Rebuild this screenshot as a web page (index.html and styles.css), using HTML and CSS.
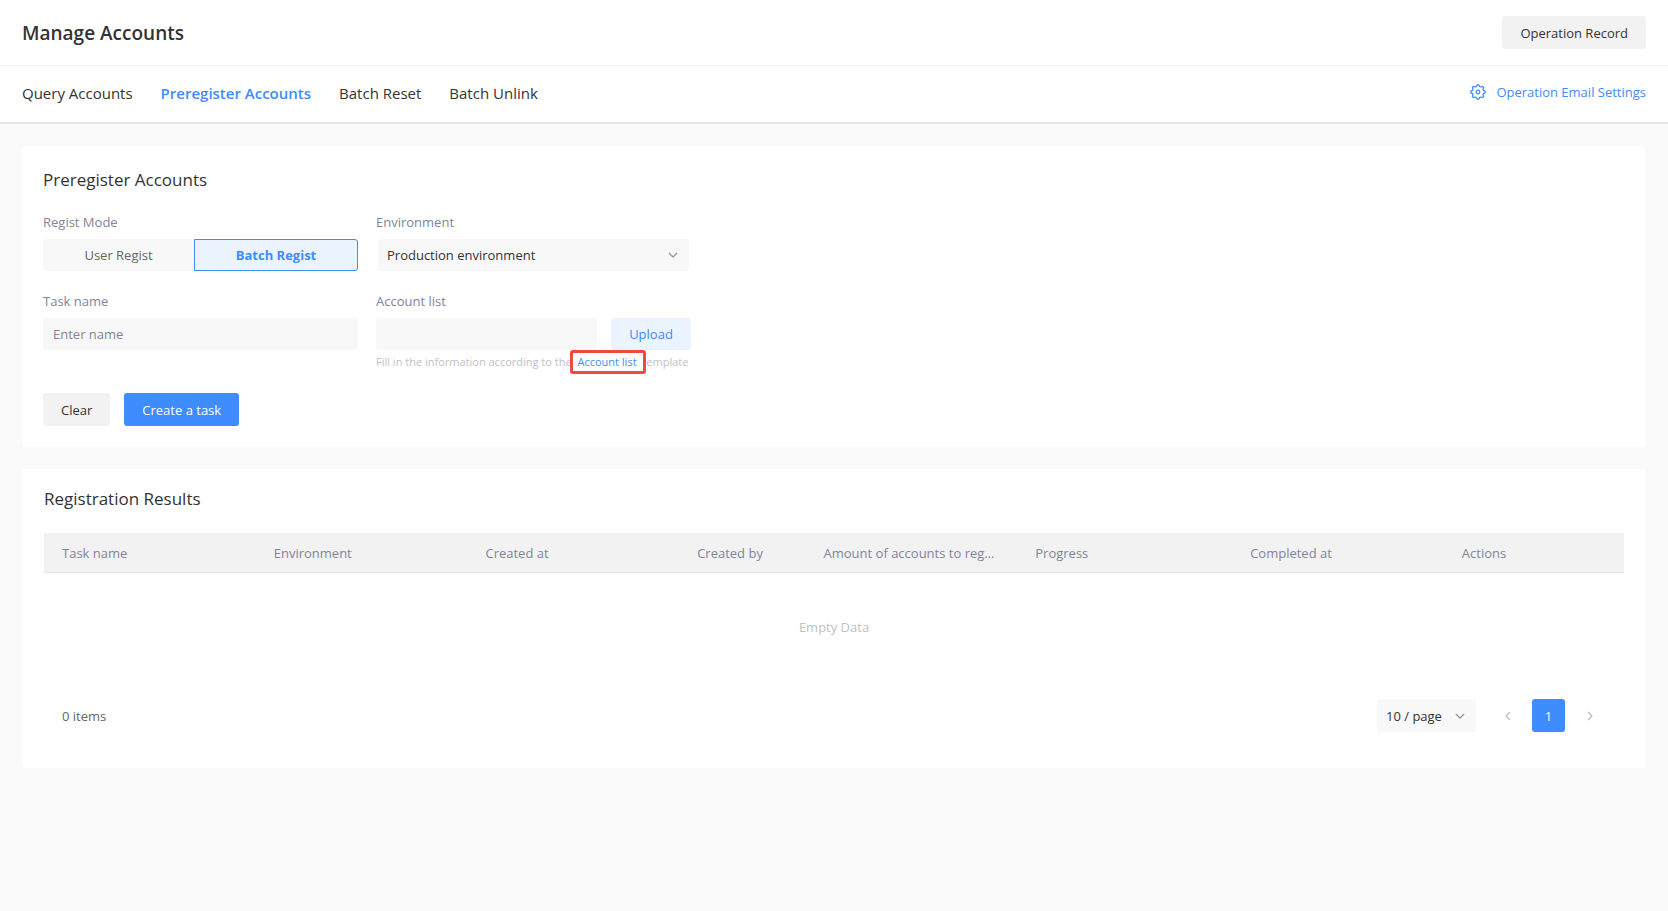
FILE: index.html
```html
<!DOCTYPE html>
<html lang="en">
<head>
<meta charset="utf-8">
<title>Manage Accounts</title>
<link rel="stylesheet" href="styles.css">
</head>
<body>
<header class="page-header">
  <h1 class="page-title">Manage Accounts</h1>
  <button class="btn btn-default" type="button">Operation Record</button>
</header>
<div class="tab-bar">
  <nav class="tabs">
    <a class="tab" href="#query">Query Accounts</a>
    <a class="tab tab-active" href="#preregister" aria-current="page">Preregister Accounts</a>
    <a class="tab" href="#reset">Batch Reset</a>
    <a class="tab" href="#unlink">Batch Unlink</a>
  </nav>
  <a class="settings-link" href="#email-settings">
    <svg class="icon-gear" viewBox="0 0 16 16" aria-hidden="true"><path d="M6.4 2.5 L7.1 .9 H8.9 L9.6 2.5 L10.8 3 L12.4 2.3 L13.7 3.6 L13 5.2 L13.5 6.4 L15.1 7.1 V8.9 L13.5 9.6 L13 10.8 L13.7 12.4 L12.4 13.7 L10.8 13 L9.6 13.5 L8.9 15.1 H7.1 L6.4 13.5 L5.2 13 L3.6 13.7 L2.3 12.4 L3 10.8 L2.5 9.6 L.9 8.9 V7.1 L2.5 6.4 L3 5.2 L2.3 3.6 L3.6 2.3 L5.2 3 Z"/><circle cx="8" cy="8" r="1.8"/></svg>
    Operation Email Settings
  </a>
</div>
<main class="content">
  <section class="card form-card">
    <h2 class="card-title">Preregister Accounts</h2>
    <form class="form">
      <div class="form-grid">
        <fieldset class="field">
          <legend class="label">Regist Mode</legend>
          <div class="segments">
            <button class="segment" type="button" aria-pressed="false">User Regist</button>
            <button class="segment segment-active" type="button" aria-pressed="true">Batch Regist</button>
          </div>
        </fieldset>
        <div class="field">
          <label class="label" for="environment">Environment</label>
          <div class="select-box env-box">
            <select class="select" id="environment"><option>Production environment</option></select>
            <svg class="chevron" viewBox="0 0 10 10" aria-hidden="true"><path d="M1 3 5 7 9 3"/></svg>
          </div>
        </div>
        <div class="field">
          <label class="label" for="task-name">Task name</label>
          <input class="input" id="task-name" type="text" placeholder="Enter name">
        </div>
        <div class="field">
          <label class="label" for="account-list">Account list</label>
          <div class="upload-row">
            <input class="input" id="account-list" type="text" readonly>
            <button class="btn-upload" type="button">Upload</button>
          </div>
          <p class="hint">Fill in the information according to the <a class="hint-link" href="#template">Account list</a> template</p>
        </div>
      </div>
      <div class="actions">
        <button class="btn btn-default" type="reset">Clear</button>
        <button class="btn btn-primary" type="button">Create a task</button>
      </div>
    </form>
  </section>
  <section class="card results-card">
    <h2 class="card-title">Registration Results</h2>
    <table class="results">
      <colgroup><col class="col-wide"><col class="col-wide"><col class="col-wide"><col class="col-narrow"><col class="col-wide"><col class="col-progress"><col class="col-wide"><col></colgroup>
      <thead>
        <tr><th>Task name</th><th>Environment</th><th>Created at</th><th>Created by</th><th>Amount of accounts to register</th><th>Progress</th><th>Completed at</th><th>Actions</th></tr>
      </thead>
      <tbody>
        <tr><td class="empty" colspan="8">Empty Data</td></tr>
      </tbody>
    </table>
    <footer class="table-footer">
      <span class="count">0 items</span>
      <div class="pagination">
        <div class="select-box size-box">
          <select class="select" aria-label="Items per page"><option>10 / page</option></select>
          <svg class="chevron" viewBox="0 0 10 10" aria-hidden="true"><path d="M1 3 5 7 9 3"/></svg>
        </div>
        <div class="pager">
          <button class="page-btn" type="button" aria-label="Previous page" disabled><svg class="chevron" viewBox="0 0 10 10" aria-hidden="true"><path d="M7 1 3 5 7 9"/></svg></button>
          <button class="page-btn page-current" type="button" aria-current="page">1</button>
          <button class="page-btn" type="button" aria-label="Next page" disabled><svg class="chevron" viewBox="0 0 10 10" aria-hidden="true"><path d="M3 1 7 5 3 9"/></svg></button>
        </div>
      </div>
    </footer>
  </section>
</main>
</body>
</html>
```
FILE: styles.css
```css
:root {
  --blue: #3f8cff;
  --blue-light: #ebf3ff;
  --text: #333;
  --muted: #82849a;
  --pale: #bfc1c8;
  --field: #f8f8f8;
  --button: #f2f2f2;
}

* { box-sizing: border-box; }

body {
  margin: 0;
  background: #fafafa;
  color: var(--text);
  font: 13px/20px "Segoe UI", "Open Sans", "Noto Sans", sans-serif;
}

button, input, select { font: inherit; color: inherit; border: 0; margin: 0; }
h1, h2, p { margin: 0; }
a { text-decoration: none; }

.page-header {
  display: flex;
  align-items: center;
  justify-content: space-between;
  height: 66px;
  padding: 0 22px;
  background: #fff;
  border-bottom: 1px solid #eee;
}

.page-title { font-size: 19px; line-height: 26px; font-weight: 600; }

.btn { height: 33px; padding: 0 18px; border-radius: 3px; }
.btn-default { background: var(--button); }
.btn-primary { background: var(--blue); color: #fff; }

.tab-bar {
  display: flex;
  align-items: center;
  justify-content: space-between;
  height: 58px;
  padding: 0 22px;
  background: #fff;
  border-bottom: 2px solid #e6e6e6;
}

.tabs { display: flex; gap: 28px; padding-bottom: 2px; }
.tab { color: var(--text); font-size: 15px; }
.tab-active { color: var(--blue); font-weight: 600; }

.settings-link { display: flex; align-items: center; gap: 10px; padding-bottom: 5px; color: var(--blue); }
.icon-gear { width: 16px; height: 16px; fill: none; stroke: currentColor; stroke-width: 1.3; stroke-linejoin: round; }

.content { display: flex; flex-direction: column; gap: 22px; padding: 22px; }
.card { background: #fff; border-radius: 4px; }
.form-card { padding: 22px 21px 21px; }
.results-card { padding: 18px 22px 36px; }
.card-title { font-size: 17px; line-height: 24px; font-weight: 400; }

.form-grid {
  display: grid;
  grid-template-columns: 315px 315px;
  gap: 20px 18px;
  padding-top: 20px;
}

.field { display: flex; flex-direction: column; min-width: 0; margin: 0; padding: 0; border: 0; }
.label { padding: 0 0 7px; color: var(--muted); }

.segments { display: grid; grid-template-columns: 151px 1fr; height: 32px; }
.segment { background: var(--field); color: #666; border-radius: 3px 0 0 3px; }
.segment-active {
  background: var(--blue-light);
  color: var(--blue);
  font-weight: 700;
  border: 1px solid var(--blue);
  border-radius: 0 3px 3px 0;
}

.select-box { display: grid; align-items: center; background: var(--field); border-radius: 3px; }
.select-box > * { grid-area: 1 / 1; }
.select { appearance: none; width: 100%; height: 100%; padding: 0 24px 0 9px; background: none; outline: 0; }
.select-box .chevron { justify-self: end; margin-right: 11px; pointer-events: none; }
.env-box { height: 32px; margin: 0 2px; }
.chevron { width: 10px; height: 10px; fill: none; stroke: #9596a4; stroke-width: 1.3; }

.input { width: 100%; min-width: 0; height: 32px; padding: 0 10px; background: var(--field); border-radius: 3px; outline: 0; }
.input::placeholder { color: var(--muted); opacity: 1; }

.upload-row { display: grid; grid-template-columns: 1fr 80px; gap: 14px; }
.btn-upload { height: 32px; padding: 0; background: var(--blue-light); color: var(--blue); border-radius: 3px; }

.hint { padding-top: 4px; font-size: 11px; line-height: 16px; color: var(--pale); white-space: nowrap; }
.hint-link { position: relative; margin: 0 3px; color: var(--blue); }
.hint-link::after { content: ""; position: absolute; inset: -4px -9px -5px -7px; border: 3px solid #f04a40; border-radius: 3px; }

.actions { display: flex; gap: 14px; padding-top: 23px; }

.results { width: 100%; margin-top: 22px; table-layout: fixed; border-collapse: separate; border-spacing: 0; }
.col-wide { width: 13.4%; }
.col-narrow { width: 8%; }
.col-progress { width: 13.6%; }
.results th {
  height: 40px;
  padding: 0 20px 0 18px;
  overflow: hidden;
  background: var(--button);
  border-bottom: 1px solid #e6e6e6;
  color: var(--muted);
  font-weight: 400;
  text-align: left;
  text-overflow: ellipsis;
  white-space: nowrap;
}
.results .empty { height: 108px; padding: 0; color: #bfbfbf; text-align: center; }

.table-footer { display: flex; align-items: center; justify-content: space-between; padding: 18px 18px 0; }
.count { color: #666; }
.pagination { display: flex; gap: 15px; }
.size-box { width: 99px; height: 33px; }
.pager { display: flex; gap: 8px; }
.page-btn { display: grid; place-items: center; width: 33px; height: 33px; padding: 0; background: none; border-radius: 3px; }
.page-btn .chevron { stroke: #bfbfbf; }
.page-current { background: var(--blue); color: #fff; }
```
